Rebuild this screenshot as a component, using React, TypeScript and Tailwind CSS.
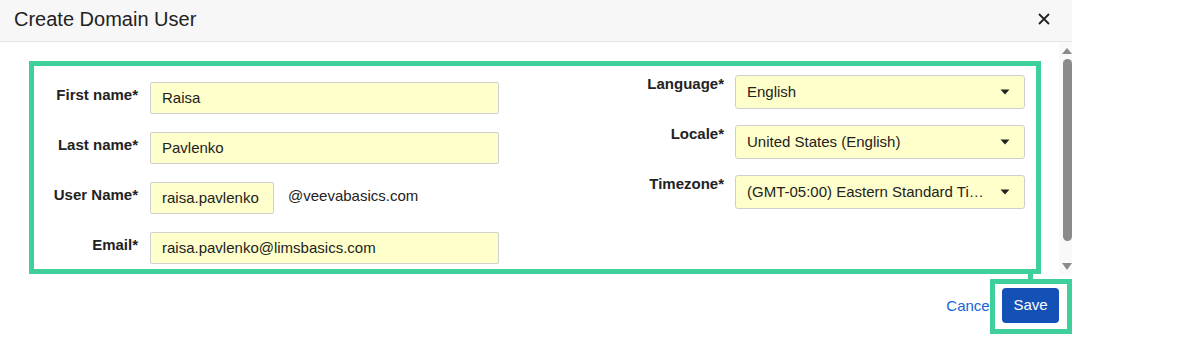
import React from "react";

const font = { fontFamily: '"Liberation Sans", Arial, sans-serif' };

function Caret() {
  return (
    <svg width="10" height="6" viewBox="0 0 10 6" className="shrink-0">
      <path d="M0.5 0.5 L9.5 0.5 L5 5.5 Z" fill="#222" />
    </svg>
  );
}

function TextField({ value, width }: { value: string; width: string }) {
  return (
    <div
      className={`${width} h-[32px] flex items-center px-[11px] bg-[#ffffcb] border border-[#cfcfcf] rounded-[2px] text-[15px] text-[#222]`}
    >
      {value}
    </div>
  );
}

function SelectField({ value }: { value: string }) {
  return (
    <div className="w-[290px] h-[34px] flex items-center justify-between pl-[11px] pr-[14px] bg-[#ffffcb] border border-[#cfcfcf] rounded-[3px] text-[15px] text-[#222]">
      <span className="whitespace-nowrap">{value}</span>
      <Caret />
    </div>
  );
}

function LeftRow({ label, children }: { label: string; children: React.ReactNode }) {
  return (
    <div className="flex items-start gap-[12px]">
      <div className="w-[104px] text-right pt-[4px] leading-[17px] text-[15px] font-bold text-[#222]">
        {label}
      </div>
      {children}
    </div>
  );
}

function RightRow({ label, value }: { label: string; value: string }) {
  return (
    <div className="flex items-start gap-[11px]">
      <div className="w-[90px] text-right pt-0 leading-[17px] text-[15px] font-bold text-[#222]">
        {label}
      </div>
      <SelectField value={value} />
    </div>
  );
}

export default function App() {
  return (
    <div className="w-[1200px] h-[344px] bg-white overflow-hidden" style={font}>
      <div className="w-[1072px]">
        {/* Header */}
        <div className="h-[42px] bg-[#f7f7f7] border-b border-[#e6e6e6] flex items-center justify-between pl-[14px] pr-[22px]">
          <div className="text-[20px] text-[#222] leading-[24px] -mt-[4px]">Create Domain User</div>
          <svg width="12" height="12" viewBox="0 0 12 12" className="-mt-[3px]">
            <path d="M1 1 L11 11 M11 1 L1 11" stroke="#222" strokeWidth="1.8" />
          </svg>
        </div>

        {/* Body */}
        <div className="flex h-[232px]">
          <div className="flex-1 pt-[19px] pl-[29px]">
            <div className="w-[1012px] h-[213px] border-[5px] border-[#3ecf9b] flex justify-between">
              <div className="pt-[16px] flex flex-col gap-[18px]">
                <LeftRow label="First name*">
                  <TextField value="Raisa" width="w-[349px]" />
                </LeftRow>
                <LeftRow label="Last name*">
                  <TextField value="Pavlenko" width="w-[349px]" />
                </LeftRow>
                <LeftRow label="User Name*">
                  <div className="flex items-start gap-[14px]">
                    <TextField value="raisa.pavlenko" width="w-[124px]" />
                    <span className="pt-[5px] text-[15px] leading-[17px] text-[#222]">@veevabasics.com</span>
                  </div>
                </LeftRow>
                <LeftRow label="Email*">
                  <TextField value="raisa.pavlenko@limsbasics.com" width="w-[349px]" />
                </LeftRow>
              </div>
              <div className="pt-[9px] pr-[11px] flex flex-col gap-[16px]">
                <RightRow label="Language*" value="English" />
                <RightRow label="Locale*" value="United States (English)" />
                <RightRow label="Timezone*" value="(GMT-05:00) Eastern Standard Ti…" />
              </div>
            </div>
          </div>
          {/* Scrollbar */}
          <div className="w-[13px] bg-[#f9f9f9] flex flex-col items-center pl-[3px] pt-[6px]">
            <svg width="10" height="6" viewBox="0 0 10 6">
              <path d="M0 6 L5 0 L10 6 Z" fill="#8a8a8a" />
            </svg>
            <div className="mt-[5px] w-[9px] h-[182px] rounded-full bg-[#8a8a8a]" />
            <svg width="10" height="7" viewBox="0 0 10 7" className="mt-[22px]">
              <path d="M0 0 L10 0 L5 7 Z" fill="#8a8a8a" />
            </svg>
          </div>
        </div>

        {/* Footer */}
        <div className="flex justify-end items-end">
          <span className="text-[15px] leading-[17px] text-[#1565d8] mr-[-3px] mb-[20px]">Cancel</span>
          <div className="relative z-10 flex flex-col">
            <div className="ml-[38px] w-[5px] h-[5px] bg-[#3ecf9b]" />
            <div className="w-[82px] h-[55px] border-[5px] border-[#3ecf9b] bg-white pl-[7px] pt-[4px]">
              <div className="w-[57px] h-[35px] rounded-[4px] bg-[#1351b6] text-white text-[15px] flex items-center justify-center">
                Save
              </div>
            </div>
          </div>
        </div>
      </div>
    </div>
  );
}
